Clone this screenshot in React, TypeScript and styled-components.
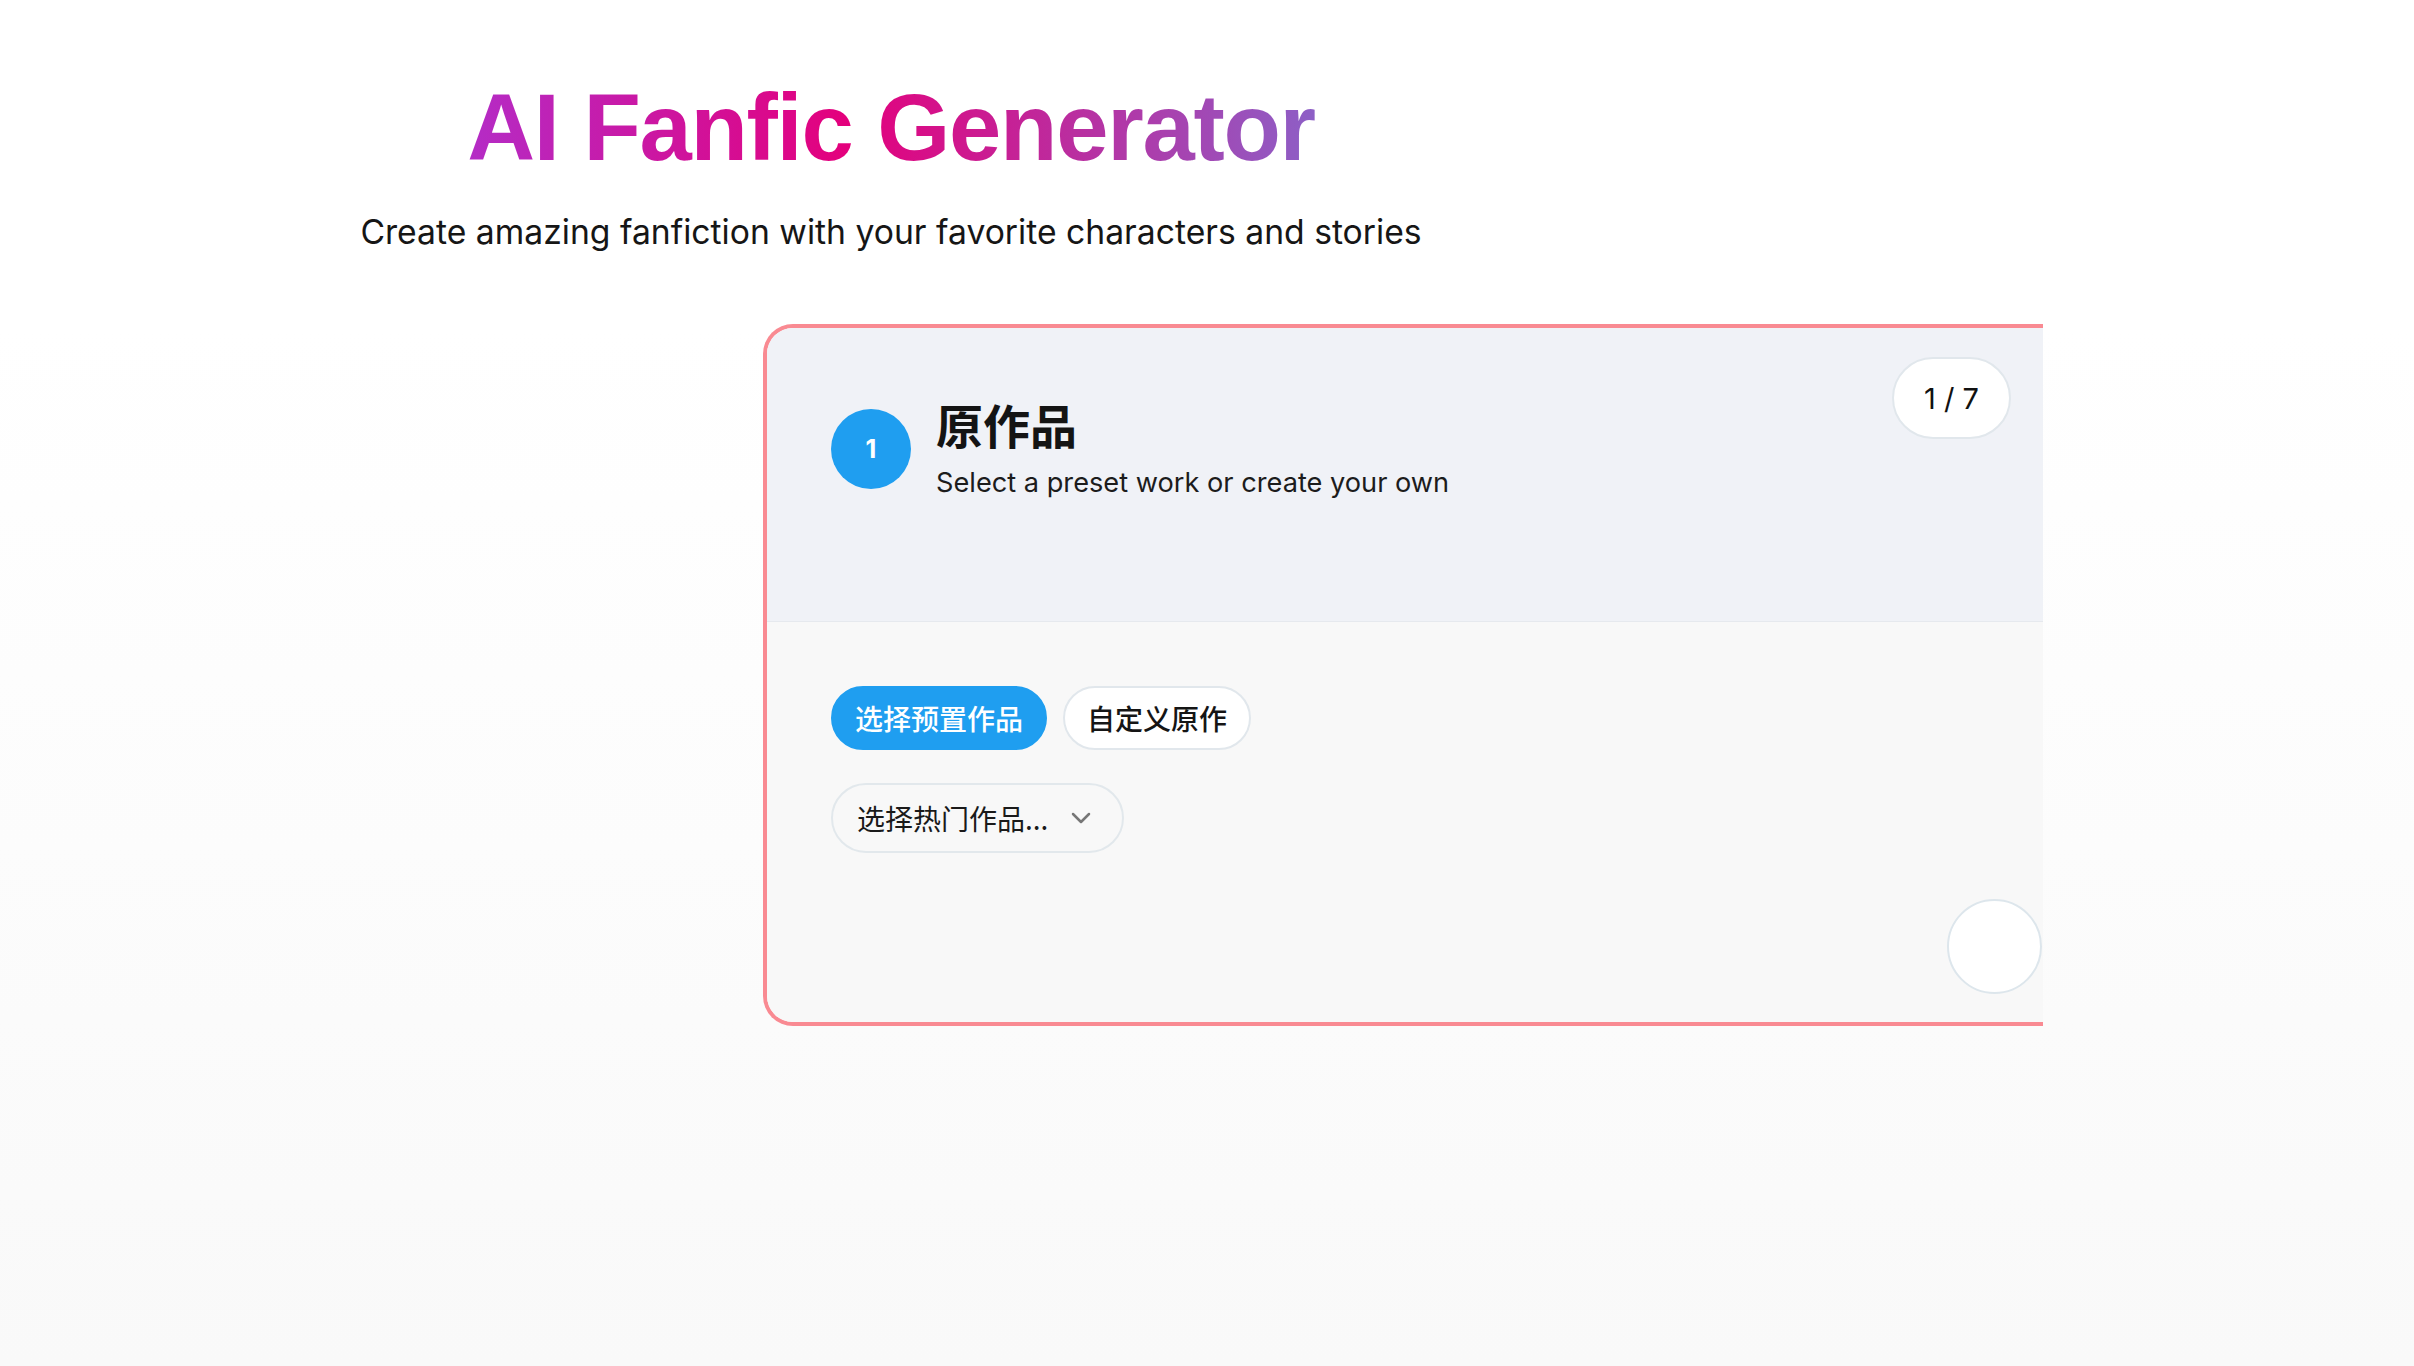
import React from 'react';
import styled, { createGlobalStyle } from 'styled-components';

const GlobalStyle = createGlobalStyle`
  html, body {
    margin: 0;
    padding: 0;
  }
  body {
    font-family: Inter, "Noto Sans CJK SC", sans-serif;
    color: #161616;
  }
  * { box-sizing: border-box; }
`;

const Page = styled.main`
  min-height: 100vh;
  background: linear-gradient(to bottom, #ffffff 0%, #ffffff 24%, #f9f9f9 100%);
  padding-top: 71px;
`;

const Hero = styled.header`
  width: 1782px;
  text-align: center;
`;

const Title = styled.h1`
  margin: 0;
  font-family: "Liberation Sans", sans-serif;
  font-weight: 700;
  font-size: 94px;
  line-height: 113px;
  letter-spacing: -1.3px;
  background: linear-gradient(90deg, #b42cc6 0%, #e4007c 45%, #8d5fc6 100%);
  -webkit-background-clip: text;
  background-clip: text;
  color: transparent;
  display: inline-block;
`;

const Subtitle = styled.p`
  margin: 24px 0 0;
  font-size: 33.7px;
  line-height: 48px;
  color: #161616;
`;

const Card = styled.section`
  position: relative;
  margin: 68px 0 0 763px;
  width: 1280px;
  border: 4px solid #f98a92;
  border-right: none;
  border-radius: 30px 0 0 30px;
  overflow: hidden;
`;

const StepHeader = styled.div`
  position: relative;
  height: 294px;
  padding: 68px 64px 0;
  background: #f0f2f7;
  border-bottom: 1px solid #e6e9ee;
  display: flex;
  align-items: flex-start;
`;

const StepRow = styled.div`
  display: flex;
  align-items: center;
  gap: 25px;
`;

const StepNumber = styled.div`
  width: 80px;
  height: 80px;
  border-radius: 50%;
  background: #1f9ef0;
  color: #fff;
  display: flex;
  align-items: center;
  justify-content: center;
  font-size: 25px;
  font-weight: 700;
`;

const StepText = styled.div`
  display: flex;
  flex-direction: column;
  gap: 12px;
`;

const StepTitle = styled.h2`
  margin: 0;
  font-family: "Noto Sans CJK SC", sans-serif;
  font-weight: 700;
  font-size: 47px;
  line-height: 56px;
  color: #141414;
`;

const StepHint = styled.p`
  margin: 0;
  font-size: 27.2px;
  line-height: 38px;
  color: #1c1c1c;
`;

const Counter = styled.span`
  position: absolute;
  top: 29px;
  right: 32px;
  width: 119px;
  height: 82px;
  border-radius: 41px;
  background: #fff;
  border: 2px solid #e1e7ec;
  display: flex;
  align-items: center;
  justify-content: center;
  font-size: 29px;
  color: #111;
`;

const StepBody = styled.div`
  position: relative;
  height: 400px;
  background: #f8f8f8;
  padding: 64px 64px 0;
  display: flex;
  flex-direction: column;
  align-items: flex-start;
  gap: 33px;
`;

const Tabs = styled.div`
  display: flex;
  gap: 16px;
`;

const Tab = styled.button<{ $active?: boolean }>`
  height: 64px;
  padding: 0 22px;
  border-radius: 32px;
  border: 2px solid ${p => (p.$active ? '#1f9ef0' : '#e1e7ec')};
  background: ${p => (p.$active ? '#1f9ef0' : '#ffffff')};
  color: ${p => (p.$active ? '#ffffff' : '#151515')};
  font-family: "Noto Sans CJK SC", sans-serif;
  font-size: 28px;
  font-weight: 500;
  cursor: pointer;
`;

const Select = styled.button`
  height: 70px;
  padding: 0 31px 0 24px;
  border-radius: 35px;
  border: 2px solid #e2e8ec;
  background: #f8f8f8;
  display: flex;
  align-items: center;
  gap: 23px;
  font-family: "Noto Sans CJK SC", sans-serif;
  font-size: 28px;
  color: #1a1a1a;
  cursor: pointer;
`;

const NextButton = styled.button`
  position: absolute;
  right: 1px;
  bottom: 28px;
  width: 95px;
  height: 95px;
  border-radius: 50%;
  background: #fff;
  border: 2px solid #dde6ec;
`;

export default function App() {
  return (
    <>
      <GlobalStyle />
      <Page>
        <Hero>
          <Title>AI Fanfic Generator</Title>
          <Subtitle>Create amazing fanfiction with your favorite characters and stories</Subtitle>
        </Hero>
        <Card>
          <StepHeader>
            <StepRow>
              <StepNumber>1</StepNumber>
              <StepText>
                <StepTitle>原作品</StepTitle>
                <StepHint>Select a preset work or create your own</StepHint>
              </StepText>
            </StepRow>
            <Counter>1 / 7</Counter>
          </StepHeader>
          <StepBody>
            <Tabs>
              <Tab $active>选择预置作品</Tab>
              <Tab>自定义原作</Tab>
            </Tabs>
            <Select>
              <span>选择热门作品...</span>
              <svg width="20" height="12" viewBox="0 0 20 12" fill="none">
                <path d="M2 2l8 8 8-8" stroke="#777" strokeWidth="2.5" strokeLinecap="round" strokeLinejoin="round" />
              </svg>
            </Select>
            <NextButton aria-label="next" />
          </StepBody>
        </Card>
      </Page>
    </>
  );
}
